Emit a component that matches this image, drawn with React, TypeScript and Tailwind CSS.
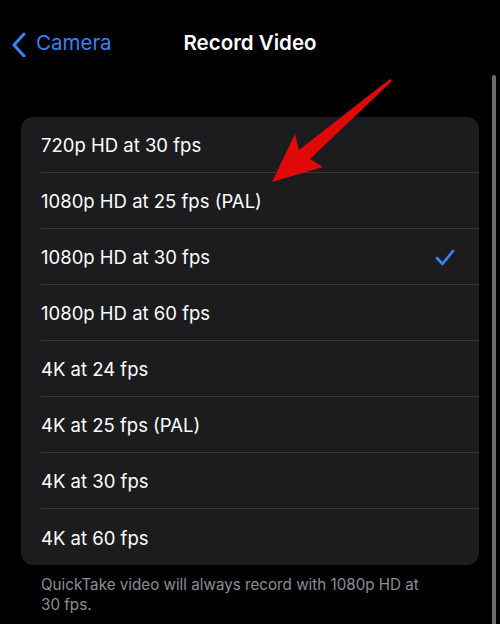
import React from "react";

const rows = [
  "720p HD at 30 fps",
  "1080p HD at 25 fps (PAL)",
  "1080p HD at 30 fps",
  "1080p HD at 60 fps",
  "4K at 24 fps",
  "4K at 25 fps (PAL)",
  "4K at 30 fps",
  "4K at 60 fps",
];

export default function App() {
  return (
    <div
      className="relative w-[500px] h-[624px] bg-black overflow-hidden text-white"
      style={{ fontFamily: "Inter, 'Noto Sans', sans-serif" }}
    >
      <div className="grid grid-cols-3 items-center h-[89px] pb-[2px]">
        <div className="flex items-center gap-[8px] pl-[10px] text-[#3a82f7]">
          <svg width="18" height="26" viewBox="0 0 18 26" fill="none">
            <path d="M14 3 L4 14 L14 25" stroke="#3a82f7" strokeWidth="3" strokeLinecap="round" strokeLinejoin="round" />
          </svg>
          <span className="text-[20.5px] leading-none">Camera</span>
        </div>
        <div className="text-center text-[20.5px] font-semibold leading-none whitespace-nowrap">
          Record Video
        </div>
        <div />
      </div>
      <div className="ml-[21px] mt-[28px] w-[458px] rounded-[12px] bg-[#1c1c1e] overflow-hidden">
        {rows.map((r, i) => (
          <div key={r} className="flex flex-col h-[56px] pl-[20px]">
            <div className="flex-1 flex items-center pr-[24px] pt-[2px]">
              <span className="text-[18.5px] leading-none text-white">{r}</span>
              {i === 2 && (
                <svg className="ml-auto" width="20" height="20" viewBox="0 0 20 20" fill="none">
                  <path d="M2 10 L7.5 16 L18 3" stroke="#3a82f7" strokeWidth="2.6" strokeLinecap="round" strokeLinejoin="round" />
                </svg>
              )}
            </div>
            {i < rows.length - 1 && <div className="h-px bg-[#38383a]" />}
          </div>
        ))}
      </div>
      <div className="pl-[41px] pr-[40px] mt-[10px] text-[15.2px] leading-[20px] text-[#8d8d92]">
        QuickTake video will always record with 1080p HD at
        <br />
        30 fps.
      </div>
      <div className="absolute left-[492px] top-[75px] w-[4px] bottom-0 bg-[#6b6b6b] rounded-t-[2px]" />
      <svg className="absolute left-0 top-0" width="500" height="624" viewBox="0 0 500 624">
        <polygon
          points="390,79 392,81 310,159 323,167 272,182 295,134 299,150"
          fill="#e10808"
        />
      </svg>
    </div>
  );
}
